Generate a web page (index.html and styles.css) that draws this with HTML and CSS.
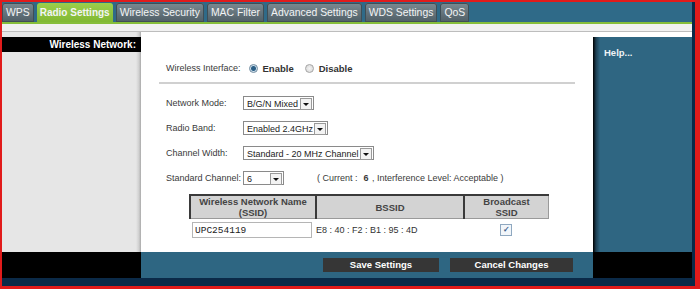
FILE: index.html
```html
<!DOCTYPE html>
<html lang="en">
<head>
    <meta charset="UTF-8">
    <title>Radio Settings</title>
    <link rel="stylesheet" href="styles.css">
</head>
<body>

<div class="frame">
    <div class="inner">
        <!-- Top tabs -->
        <div class="tabbar">
            <div class="tab">WPS</div>
            <div class="tab active">Radio Settings</div>
            <div class="tab">Wireless Security</div>
            <div class="tab">MAC Filter</div>
            <div class="tab">Advanced Settings</div>
            <div class="tab">WDS Settings</div>
            <div class="tab">QoS</div>
        </div>
        <div class="green-line"></div>
        <div class="light-band"></div>

        <div class="main">
            <div class="side">
                <div class="side-title">Wireless Network:</div>
            </div>

            <div class="content">
                <div class="iface">
                    <span class="iface-label">Wireless Interface:</span>
                    <span class="radio on"></span><b>Enable</b>
                    <span class="radio"></span><b>Disable</b>
                </div>
                <div class="divider"></div>

                <div class="row">
                    <span class="label">Network Mode:</span>
                    <span class="select w-mode">B/G/N Mixed<i class="arrow"></i></span>
                </div>
                <div class="row">
                    <span class="label">Radio Band:</span>
                    <span class="select w-band">Enabled 2.4GHz<i class="arrow"></i></span>
                </div>
                <div class="row">
                    <span class="label">Channel Width:</span>
                    <span class="select w-width">Standard - 20 MHz Channel<i class="arrow"></i></span>
                </div>
                <div class="row channel">
                    <span class="label">Standard Channel:</span>
                    <span class="select w-chan">6<i class="arrow"></i></span>
                    <span class="current">( Current :&nbsp; <b>6</b> , Interference Level: Acceptable )</span>
                </div>

                <table class="ssid-table">
                    <tr>
                        <th class="c1">Wireless Network Name<br>(SSID)</th>
                        <th class="c2">BSSID</th>
                        <th class="c3">Broadcast<br>SSID</th>
                    </tr>
                    <tr>
                        <td><div class="ssid-input">UPC254119</div></td>
                        <td class="bssid">E8 : 40 : F2 : B1 : 95 : 4D</td>
                        <td class="check-cell"><span class="checkbox">&#10003;</span></td>
                    </tr>
                </table>
            </div>

            <div class="help-col">
                <div class="help">Help...</div>
            </div>
        </div>

        <div class="bottom">
            <div class="bottom-left"></div>
            <div class="bottom-mid">
                <div class="btn save">Save Settings</div>
                <div class="btn cancel">Cancel Changes</div>
            </div>
            <div class="bottom-right"></div>
        </div>
        <div class="navy"></div>
    </div>
</div>

</body>
</html>
```

FILE: styles.css
```css
body {
    margin: 0;
    font-family: 'Liberation Sans', Arial, sans-serif;
    background-color: #0b2a48;
}

.frame {
    width: 700px;
    height: 289px;
    box-sizing: border-box;
    border: 2px solid #e11b1b;
    border-right-width: 5px;
    border-bottom-width: 3px;
    background-color: #0b2a48;
}

.inner {
    display: flex;
    flex-direction: column;
    height: 100%;
}

/* Tabs */
.tabbar {
    display: flex;
    align-items: flex-end;
    gap: 3px;
    height: 20px;
    width: 690px;
    background-color: #2f6a88;
}

.tab {
    height: 19px;
    line-height: 19px;
    padding: 0 4px;
    font-size: 10.4px;
    color: #f2f4f5;
    background: linear-gradient(#7b8a91, #4f5e66);
    border-radius: 3px 3px 0 0;
    box-shadow: inset 0 0 0 1px #3f4e56;
}

.tab.active {
    font-size: 10px;
    font-weight: bold;
    padding: 0 3px;
    background: linear-gradient(#9ccf4b, #80b833);
    box-shadow: none;
}

.green-line {
    height: 2px;
    width: 690px;
    background-color: #86be3a;
}

.light-band {
    height: 7px;
    width: 690px;
    background-color: #f1f1f1;
    border-bottom: 1px solid #bdbdbd;
}

/* Main area */
.main {
    display: flex;
    height: 220px;
    width: 690px;
}

.side {
    width: 139px;
    background: linear-gradient(to right, #e6e6e6 134px, #cfcfcf 137px, #a9a9a9 139px);
    padding-top: 5px;
    box-sizing: border-box;
}

.side-title {
    height: 15px;
    line-height: 16px;
    background-color: #000;
    color: #fff;
    font-size: 10px;
    font-weight: bold;
    text-align: right;
    padding-right: 5px;
}

.content {
    width: 452px;
    background-color: #fff;
    font-size: 9px;
    color: #3a3a3a;
    padding: 30px 0 0 25px;
    box-sizing: border-box;
}

.iface {
    display: flex;
    align-items: center;
    height: 12px;
}

.iface-label {
    margin-right: 8px;
}

.iface b {
    font-size: 9.5px;
    color: #333;
    margin-right: 11px;
}

.radio {
    width: 9px;
    height: 9px;
    border-radius: 50%;
    border: 1px solid #a5a5a5;
    background: radial-gradient(#f4f4f4, #d4d4d4);
    margin-right: 5px;
    box-sizing: border-box;
}

.radio.on {
    border-color: #6f8ba0;
    background: radial-gradient(#2b5f86 0, #2b5f86 2px, #cfe0ec 3px, #e8eff5 5px);
}

.divider {
    height: 2px;
    width: 416px;
    margin: 8px 0 12px -7px;
    background-color: #d0d0d0;
}

.row {
    display: flex;
    align-items: center;
    height: 14px;
    margin-bottom: 11px;
}

.row.channel {
    margin-top: 4px;
    margin-bottom: 9px;
}

.label {
    width: 77px;
}

.select {
    position: relative;
    height: 14px;
    line-height: 14px;
    box-sizing: border-box;
    border: 1px solid #8a8a8a;
    padding-left: 3px;
    color: #222;
    background-color: #fff;
}

.w-mode { width: 71px; }
.w-band { width: 85px; }
.w-width { width: 131px; }
.w-chan { width: 41px; }

.arrow {
    position: absolute;
    right: 1px;
    top: 1px;
    width: 10px;
    height: 10px;
    border: 1px solid #9a9a9a;
    background-color: #f3f3f3;
}

.arrow::after {
    content: '';
    position: absolute;
    left: 2px;
    top: 4px;
    border-left: 3px solid transparent;
    border-right: 3px solid transparent;
    border-top: 3px solid #111;
}

.current {
    margin-left: 33px;
}

.current b {
    margin: 0 1px;
}

/* SSID table */
.ssid-table {
    margin-left: 23px;
    border-collapse: collapse;
}

.ssid-table th {
    height: 22px;
    padding: 0;
    background-color: #d3d3d3;
    color: #444;
    font-size: 9.5px;
    line-height: 11px;
    border-top: 2px solid #3a3a3a;
    border-left: 2px solid #3a3a3a;
    border-bottom: 1px solid #9a9a9a;
}

.ssid-table th.c3 {
    border-right: 1px solid #9a9a9a;
}

.c1 { width: 124px; }
.c2 { width: 146px; }
.c3 { width: 83px; }

.ssid-table td {
    padding: 2px 0 0 0;
    height: 18px;
}

.ssid-input {
    width: 120px;
    height: 16px;
    line-height: 16px;
    margin-left: 2px;
    box-sizing: border-box;
    border: 1px solid #b5b5b5;
    padding-left: 2px;
    font-family: 'Liberation Mono', monospace;
    font-size: 9.5px;
    color: #222;
}

.bssid {
    padding-left: 2px;
    color: #333;
}

.check-cell {
    text-align: center;
}

.checkbox {
    display: inline-block;
    width: 10px;
    height: 10px;
    line-height: 10px;
    border: 1px solid #8fa8c0;
    background-color: #f2f6fa;
    color: #3b5b8a;
    font-size: 8px;
    font-weight: bold;
    text-align: center;
}

/* Help column */
.help-col {
    width: 99px;
    background-color: #fff;
    padding-top: 5px;
    box-sizing: border-box;
}

.help {
    height: 215px;
    background: linear-gradient(to right, #000 0, #1d3f52 3px, #2f6682 7px);
    color: #eef3f6;
    font-size: 9.5px;
    font-weight: bold;
    padding: 10px 0 0 11px;
    box-sizing: border-box;
}

/* Bottom bar */
.bottom {
    display: flex;
    height: 26px;
    width: 690px;
}

.bottom-left {
    width: 139px;
    background-color: #000;
}

.bottom-mid {
    width: 452px;
    background-color: #2e6682;
    display: flex;
    align-items: flex-start;
    padding: 6px 0 0 182px;
    box-sizing: border-box;
    gap: 11px;
}

.btn {
    height: 14px;
    line-height: 14px;
    background-color: #363636;
    color: #fff;
    font-size: 9.5px;
    font-weight: bold;
    text-align: center;
}

.save { width: 116px; }
.cancel { width: 123px; }

.bottom-right {
    width: 99px;
    background-color: #000;
}

.navy {
    flex: 1;
    background-color: #0b2a48;
}
```
